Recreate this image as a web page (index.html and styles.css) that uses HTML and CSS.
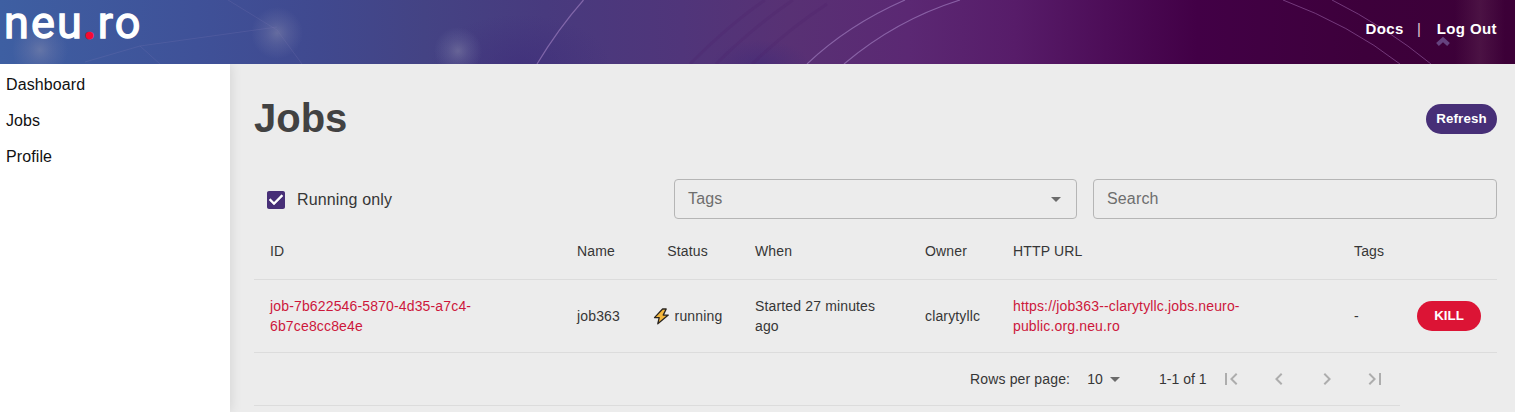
FILE: index.html
```html
<!DOCTYPE html>
<html lang="en">
<head>
<meta charset="utf-8">
<title>Jobs</title>
<link rel="stylesheet" href="styles.css">
</head>
<body>
<header class="topbar">
  <svg class="topbar-art" viewBox="0 0 1515 64" preserveAspectRatio="none" aria-hidden="true">
    <defs>
      <linearGradient id="base" gradientUnits="userSpaceOnUse" x1="0" y1="0" x2="1515" y2="0">
        <stop offset="0" stop-color="#3e5fa2"/>
        <stop offset=".13" stop-color="#3f5198"/>
        <stop offset=".21" stop-color="#40498f"/>
        <stop offset=".28" stop-color="#444384"/>
        <stop offset=".36" stop-color="#483a7e"/>
        <stop offset=".45" stop-color="#50357a"/>
        <stop offset=".52" stop-color="#583174"/>
        <stop offset=".6" stop-color="#5b2873"/>
        <stop offset=".67" stop-color="#571c69"/>
        <stop offset=".73" stop-color="#4d0d58"/>
        <stop offset=".79" stop-color="#420046"/>
        <stop offset=".9" stop-color="#3d003b"/>
        <stop offset="1" stop-color="#3c0037"/>
      </linearGradient>
      <radialGradient id="glow">
        <stop offset="0" stop-color="#9293b0" stop-opacity=".45"/>
        <stop offset=".45" stop-color="#8587ae" stop-opacity=".24"/>
        <stop offset="1" stop-color="#8084b0" stop-opacity="0"/>
      </radialGradient>
      <radialGradient id="shade">
        <stop offset="0" stop-color="#3b2878" stop-opacity=".45"/>
        <stop offset="1" stop-color="#3b2878" stop-opacity="0"/>
      </radialGradient>
      <linearGradient id="beam">
        <stop offset="0" stop-color="#5a2450" stop-opacity="0"/>
        <stop offset=".5" stop-color="#5a2450" stop-opacity=".5"/>
        <stop offset="1" stop-color="#5a2450" stop-opacity="0"/>
      </linearGradient>
    </defs>
    <rect width="1515" height="64" fill="url(#base)"/>
    <ellipse cx="520" cy="64" rx="90" ry="50" fill="url(#shade)"/>
    <ellipse cx="760" cy="64" rx="50" ry="24" fill="url(#shade)"/>
    <circle cx="40" cy="50" r="28" fill="url(#glow)"/>
    <circle cx="277" cy="33" r="26" fill="url(#glow)"/>
    <circle cx="458" cy="51" r="24" fill="url(#glow)"/>
    <rect x="1455" width="50" height="64" fill="url(#beam)"/>
    <g fill="none" stroke="#7f79b5" stroke-opacity=".22">
      <path d="M85 62L140 46L277 27"/>
      <path d="M228 0L277 30L302 64"/>
      <path d="M140 46L160 64"/>
    </g>
    <g fill="none" stroke="#4b2068" stroke-opacity=".2" stroke-width="3">
      <path d="M690 64Q730 24 765 0"/>
      <path d="M716 64Q752 28 793 0"/>
      <path d="M752 64Q790 28 827 4"/>
    </g>
    <g fill="none" stroke="#a785c6" stroke-opacity=".6" stroke-width="1.2">
      <path d="M537 64Q558 29 583.500 0"/>
      <path d="M807 64Q848 25 905 0"/>
      <path d="M844 64Q896 20 960 0"/>
    </g>
    <g fill="none" stroke="#91579c" stroke-opacity=".65">
      <path d="M1283 0Q1350 25 1400 64"/>
      <path d="M1332 0Q1386 27 1431 64"/>
    </g>
    <path d="M1437.500 44.500L1443 39.500L1448.500 44.500" fill="none" stroke="#65437f" stroke-width="4"/>
  </svg>
  <div class="logo">neu<span class="logo-dot">.</span>ro</div>
  <nav class="account"><a>Docs</a><span class="divider">|</span><a>Log Out</a></nav>
</header>
<div class="layout">
  <aside class="sidebar"><a>Dashboard</a><a>Jobs</a><a>Profile</a></aside>
  <main class="content">
    <div class="heading"><h1>Jobs</h1><button class="pill refresh">Refresh</button></div>
    <div class="filters">
      <label class="running">
        <svg width="24" height="24" viewBox="0 0 24 24"><path fill="#472f77" d="M19 3H5c-1.110 0-2 .9-2 2v14c0 1.100.89 2 2 2h14c1.110 0 2-.9 2-2V5c0-1.100-.89-2-2-2zm-9 14l-5-5 1.410-1.410L10 14.170l7.590-7.590L19 8l-9 9z"/><path fill="#fff" d="M10 17l-5-5 1.410-1.410L10 14.170l7.590-7.590L19 8z"/></svg>
        <span>Running only</span>
      </label>
      <div class="field"><span>Tags</span><svg width="24" height="24" viewBox="0 0 24 24"><path fill="#6b6b6b" d="M7 10l5 5 5-5z"/></svg></div>
      <div class="field"><span>Search</span></div>
    </div>
    <div class="row head">
      <div>ID</div><div>Name</div><div class="status">Status</div><div>When</div><div>Owner</div><div>HTTP URL</div><div>Tags</div><div></div>
    </div>
    <div class="row body">
      <div class="link">job-7b622546-5870-4d35-a7c4-<br>6b7ce8cc8e4e</div>
      <div>job363</div>
      <div class="status"><svg class="bolt" width="17" height="17" viewBox="0 0 17 17"><path d="M9.600 1L1.500 9.600H6.200L4.800 15.800L15.300 7.100H10.200L13.200 1Z" fill="#f5b83d" stroke="#29241f" stroke-width="1.300" stroke-linejoin="round"/></svg><span>running</span></div>
      <div>Started 27 minutes<br>ago</div>
      <div>clarytyllc</div>
      <div class="link">https://job363--clarytyllc.jobs.neuro-<br>public.org.neu.ro</div>
      <div>-</div>
      <div><button class="pill kill">KILL</button></div>
    </div>
    <div class="pager">
      <span>Rows per page:</span>
      <span class="size">10</span>
      <svg class="caret" width="24" height="24" viewBox="0 0 24 24"><path fill="#6b6b6b" d="M7 10l5 5 5-5z"/></svg>
      <span class="range">1-1 of 1</span>
      <div class="steps">
        <svg viewBox="0 0 24 24"><path d="M18.410 16.590L13.820 12l4.590-4.590L17 6l-6 6 6 6zM6 6h2v12H6z"/></svg>
        <svg viewBox="0 0 24 24"><path d="M15.410 16.590L10.830 12l4.580-4.590L14 6l-6 6 6 6z"/></svg>
        <svg viewBox="0 0 24 24"><path d="M8.590 16.590L13.170 12 8.590 7.410 10 6l6 6-6 6z"/></svg>
        <svg viewBox="0 0 24 24"><path d="M5.590 7.410L10.180 12l-4.590 4.590L7 18l6-6-6-6zM16 6h2v12h-2z"/></svg>
      </div>
    </div>
  </main>
</div>
</body>
</html>
```
FILE: styles.css
```css
* { box-sizing: border-box; }
body {
  margin: 0;
  height: 412px;
  overflow: hidden;
  background: #ececec;
  color: #363636;
  font-family: "Liberation Sans", Arial, sans-serif;
}
.topbar {
  position: relative;
  display: flex;
  justify-content: space-between;
  height: 64px;
  padding: 0 18px 0 4px;
  color: #fff;
}
.topbar-art { position: absolute; inset: 0; width: 100%; height: 100%; }
.logo {
  position: relative;
  font: 400 45px/46px Roboto, sans-serif;
  letter-spacing: 2.1px;
  -webkit-text-stroke: 1.3px #fff;
}
.logo-dot { color: #f50a32; -webkit-text-stroke: 3px #f50a32; }
.account {
  position: relative;
  display: flex;
  padding-top: 20px;
  font-size: 15px;
  line-height: 18px;
  font-weight: 700;
  letter-spacing: .4px;
}
.divider { width: 33px; padding-right: 2px; text-align: center; font-weight: 400; color: #e5c9d5; }
.layout { display: flex; height: 348px; }
.sidebar {
  width: 230px;
  padding: 2px 6px;
  background: #fff;
  color: #111;
  box-shadow: 0 0 12px rgba(0, 0, 0, .12);
  clip-path: inset(0 -12px 0 0);
}
.sidebar a { display: block; height: 36px; line-height: 37px; font-size: 16px; letter-spacing: .1px; }
.content { flex: 1; padding: 0 18px 0 24px; }
.heading { display: flex; align-items: center; justify-content: space-between; height: 110px; }
h1 { margin: 0 0 2px; font-size: 40px; line-height: 48px; color: #424242; }
.pill {
  height: 30px;
  padding: 0;
  border: 0;
  border-radius: 15px;
  color: #fff;
  font: 700 13.333px/28px "Liberation Sans", Arial, sans-serif;
}
.refresh { width: 71px; background: #472f77; letter-spacing: .1px; }
.kill { width: 64px; background: #dc1435; }
.filters {
  display: grid;
  grid-template-columns: 404px 403px 404px;
  column-gap: 16px;
  padding-top: 5px;
  height: 49px;
}
.running { display: flex; align-items: center; gap: 9px; padding-left: 10px; font-size: 16px; letter-spacing: .15px; height: 41px; }
.field {
  display: flex;
  align-items: center;
  justify-content: space-between;
  height: 40px;
  padding: 0 8px 0 13px;
  border: 1px solid #b5b5b5;
  border-radius: 4px;
  color: #6e6e6e;
  font-size: 16px;
  letter-spacing: .15px;
}
.row {
  display: grid;
  grid-template-columns: 307px 75px 103px 170px 88px 341px 63px 96px;
  align-items: center;
  border-bottom: 1px solid #dcdcdc;
  font-size: 14px;
  line-height: 20px;
  letter-spacing: .15px;
}
.row > div { padding-left: 16px; white-space: nowrap; }
.row > .status { display: flex; justify-content: center; align-items: center; padding: 0; }
.head { height: 57px; }
.body { height: 73px; }
.body .bolt { margin-right: 5px; }
.link { color: #cd173b; }
.row .kill { display: block; }
.pager {
  display: flex;
  align-items: center;
  width: 1146px;
  height: 53px;
  padding-left: 716px;
  border-bottom: 1px solid #dcdcdc;
  font-size: 14px;
  letter-spacing: .15px;
  white-space: nowrap;
}
.size { margin-left: 17px; }
.range { margin-left: 32px; letter-spacing: 0; }
.steps { display: flex; gap: 24px; margin-left: 12px; }
.steps svg { width: 24px; height: 24px; fill: #adadad; flex: none; }
```
